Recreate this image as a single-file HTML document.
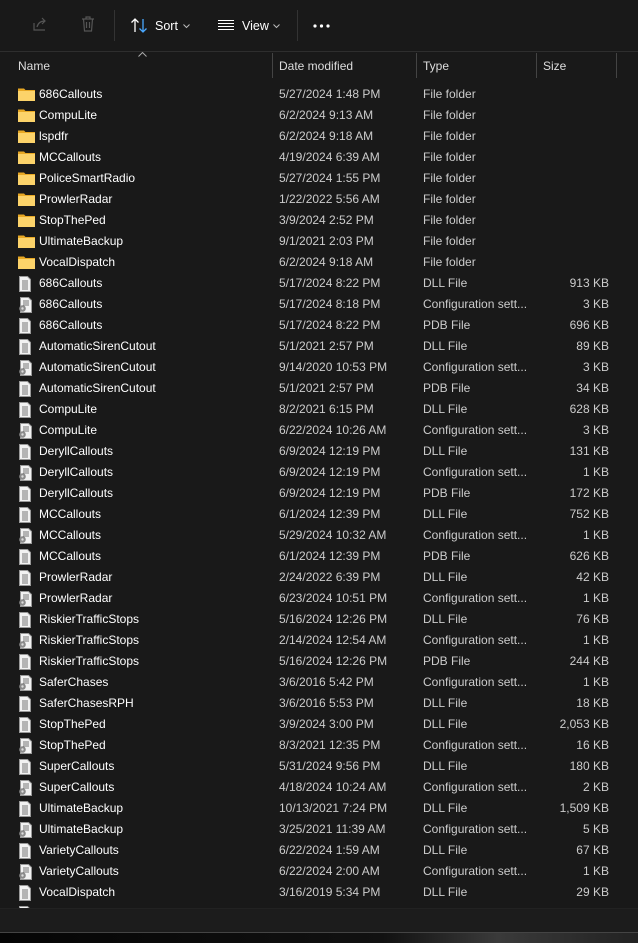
<!DOCTYPE html>
<html><head><meta charset="utf-8"><style>
*{margin:0;padding:0;box-sizing:border-box}
body{width:638px;height:943px;background:#191919;font-family:"Segoe UI","Liberation Sans",sans-serif;color:#fff;font-size:12px;overflow:hidden;position:relative}
.tb{position:absolute;top:0;left:0;width:638px;height:52px;border-bottom:1px solid #2e2e2e}
.sep{position:absolute;top:10px;width:1px;height:31px;background:#333}
.t{position:absolute;top:19px;font-size:12.5px;color:#fff}
.hdr{position:absolute;top:53px;left:0;width:638px;height:25px}
.hdr span{position:absolute;top:6px;color:#ddd;font-size:12px}
.vs{position:absolute;top:53px;width:1px;height:25px;background:#444}
.list{position:absolute;top:84px;left:0;width:638px;height:824px;overflow:hidden}
.r{position:relative;height:21px;line-height:21px;color:#fff;font-size:12px}
.r .n{position:absolute;left:39px}
.r .d{position:absolute;left:279px;color:#ccc}
.r .y{position:absolute;left:423px;color:#ccc}
.r .s{position:absolute;right:29px;color:#ccc}
.r svg{position:absolute;left:18px;top:3px}
.bot{position:absolute;top:908px;left:0;width:638px;height:24px;background:#1c1c1c;border-top:1px solid #222}
.bar{position:absolute;top:932px;left:0;width:638px;height:11px;background:linear-gradient(90deg,#050505 0%,#111 60%,#3a3a3a 78%,#222 100%);border-top:1px solid #444}
</style></head><body>
<div class="tb">
<svg style="position:absolute;left:31px;top:15px" width="18" height="18" viewBox="0 0 18 18" fill="none" stroke="#555" stroke-width="1.2"><path d="M3 8v7h11"/><path d="M6 12c1-4 4-6 8-6M11 3l3 3-3 3"/></svg>
<svg style="position:absolute;left:80px;top:15px" width="16" height="18" viewBox="0 0 16 18" fill="none" stroke="#555" stroke-width="1.2"><path d="M2 4h12M6 4V2h4v2M3.5 4l1 12h7l1-12M6.5 7v6M9.5 7v6"/></svg>
<div class="sep" style="left:114px"></div>
<svg style="position:absolute;left:130px;top:17px" width="18" height="17" viewBox="0 0 18 17" fill="none" stroke-width="1.3"><path d="M5 15V2M1.5 5.5 5 2l3.5 3.5" stroke="#fff"/><path d="M13 2v13M9.5 11.5 13 15l3.5-3.5" stroke="#4aa8ff"/></svg>
<span class="t" style="left:155px">Sort</span>
<svg style="position:absolute;left:183px;top:24px" width="7" height="5" viewBox="0 0 7 5" fill="none" stroke="#bbb"><path d="M.5.5 3.5 3.5 6.5.5"/></svg>
<svg style="position:absolute;left:218px;top:19px" width="16" height="12" viewBox="0 0 16 12" stroke="#fff" stroke-width="1"><path d="M0 1.5h16M0 4.5h16M0 7.5h16M0 10.5h16"/></svg>
<span class="t" style="left:242px">View</span>
<svg style="position:absolute;left:273px;top:24px" width="7" height="5" viewBox="0 0 7 5" fill="none" stroke="#bbb"><path d="M.5.5 3.5 3.5 6.5.5"/></svg>
<div class="sep" style="left:297px"></div>
<svg style="position:absolute;left:313px;top:24px" width="18" height="4"><circle cx="2" cy="2" r="1.6" fill="#fff"/><circle cx="8.5" cy="2" r="1.6" fill="#fff"/><circle cx="15" cy="2" r="1.6" fill="#fff"/></svg>
</div>
<svg style="position:absolute;left:138px;top:52px" width="9" height="5" viewBox="0 0 9 5" fill="none" stroke="#aaa"><path d="M.5 4.5 4.5.5 8.5 4.5"/></svg>
<div class="hdr"><span style="left:18px">Name</span><span style="left:279px">Date modified</span><span style="left:423px">Type</span><span style="left:543px">Size</span></div>
<div class="vs" style="left:272px"></div><div class="vs" style="left:416px"></div><div class="vs" style="left:536px"></div><div class="vs" style="left:616px"></div>
<div class="list" id="L"></div>
<div class="bot"></div>
<div class="bar"></div>
<script>
var F='<svg width="17" height="14" viewBox="0 0 17 14"><path d="M0 1.5h6l1.5 1.5H17V14H0z" fill="#e8a824"/><path d="M0 4h17v10H0z" fill="#fcd36a"/></svg>';
var D='<svg width="14" height="16" viewBox="0 0 14 16"><path d="M1.5.5h8l3 3v12h-11z" fill="#f2f2f2" stroke="#999"/><path d="M4 5h6M4 7h6M4 9h6M4 11h6M4 13h6" stroke="#777"/></svg>';
var C='<svg width="14" height="16" viewBox="0 0 14 16"><path d="M2.5.5h8l3 3v12h-11z" fill="#f2f2f2" stroke="#999"/><path d="M5 4h6M5 6h6M5 8h6" stroke="#777"/><circle cx="4.5" cy="11.5" r="3.3" fill="#8a8a8a"/><circle cx="4.5" cy="11.5" r="1.2" fill="#ddd"/></svg>';
var rows=[
["F","686Callouts","5/27/2024 1:48 PM","File folder",""],
["F","CompuLite","6/2/2024 9:13 AM","File folder",""],
["F","lspdfr","6/2/2024 9:18 AM","File folder",""],
["F","MCCallouts","4/19/2024 6:39 AM","File folder",""],
["F","PoliceSmartRadio","5/27/2024 1:55 PM","File folder",""],
["F","ProwlerRadar","1/22/2022 5:56 AM","File folder",""],
["F","StopThePed","3/9/2024 2:52 PM","File folder",""],
["F","UltimateBackup","9/1/2021 2:03 PM","File folder",""],
["F","VocalDispatch","6/2/2024 9:18 AM","File folder",""],
["D","686Callouts","5/17/2024 8:22 PM","DLL File","913 KB"],
["C","686Callouts","5/17/2024 8:18 PM","Configuration sett...","3 KB"],
["D","686Callouts","5/17/2024 8:22 PM","PDB File","696 KB"],
["D","AutomaticSirenCutout","5/1/2021 2:57 PM","DLL File","89 KB"],
["C","AutomaticSirenCutout","9/14/2020 10:53 PM","Configuration sett...","3 KB"],
["D","AutomaticSirenCutout","5/1/2021 2:57 PM","PDB File","34 KB"],
["D","CompuLite","8/2/2021 6:15 PM","DLL File","628 KB"],
["C","CompuLite","6/22/2024 10:26 AM","Configuration sett...","3 KB"],
["D","DeryllCallouts","6/9/2024 12:19 PM","DLL File","131 KB"],
["C","DeryllCallouts","6/9/2024 12:19 PM","Configuration sett...","1 KB"],
["D","DeryllCallouts","6/9/2024 12:19 PM","PDB File","172 KB"],
["D","MCCallouts","6/1/2024 12:39 PM","DLL File","752 KB"],
["C","MCCallouts","5/29/2024 10:32 AM","Configuration sett...","1 KB"],
["D","MCCallouts","6/1/2024 12:39 PM","PDB File","626 KB"],
["D","ProwlerRadar","2/24/2022 6:39 PM","DLL File","42 KB"],
["C","ProwlerRadar","6/23/2024 10:51 PM","Configuration sett...","1 KB"],
["D","RiskierTrafficStops","5/16/2024 12:26 PM","DLL File","76 KB"],
["C","RiskierTrafficStops","2/14/2024 12:54 AM","Configuration sett...","1 KB"],
["D","RiskierTrafficStops","5/16/2024 12:26 PM","PDB File","244 KB"],
["C","SaferChases","3/6/2016 5:42 PM","Configuration sett...","1 KB"],
["D","SaferChasesRPH","3/6/2016 5:53 PM","DLL File","18 KB"],
["D","StopThePed","3/9/2024 3:00 PM","DLL File","2,053 KB"],
["C","StopThePed","8/3/2021 12:35 PM","Configuration sett...","16 KB"],
["D","SuperCallouts","5/31/2024 9:56 PM","DLL File","180 KB"],
["C","SuperCallouts","4/18/2024 10:24 AM","Configuration sett...","2 KB"],
["D","UltimateBackup","10/13/2021 7:24 PM","DLL File","1,509 KB"],
["C","UltimateBackup","3/25/2021 11:39 AM","Configuration sett...","5 KB"],
["D","VarietyCallouts","6/22/2024 1:59 AM","DLL File","67 KB"],
["C","VarietyCallouts","6/22/2024 2:00 AM","Configuration sett...","1 KB"],
["D","VocalDispatch","3/16/2019 5:34 PM","DLL File","29 KB"],
["D","","","",""]];
var h='';rows.forEach(function(r){var ic=r[0]=="F"?F:(r[0]=="C"?C:D);
h+='<div class="r">'+ic+'<span class="n">'+r[1]+'</span><span class="d">'+r[2]+'</span><span class="y">'+r[3]+'</span><span class="s">'+r[4]+'</span></div>';});
document.getElementById('L').innerHTML=h;
</script>
</body></html>
